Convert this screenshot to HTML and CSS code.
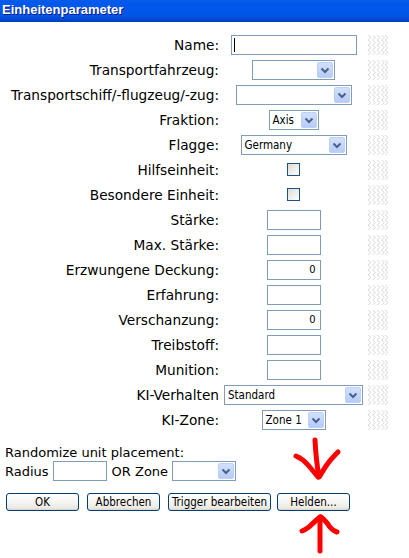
FILE: index.html
```html
<!DOCTYPE html>
<html lang="de">
<head>
<meta charset="utf-8">
<title>Einheitenparameter</title>
<link rel="stylesheet" href="styles.css">
</head>
<body>
<div class="titlebar">Einheitenparameter</div>

<div class="form">
  <div class="lbl">Name:</div>
  <div class="fld"><div class="inp w126"><span class="caret"></span></div></div>
  <div class="grip"></div>

  <div class="lbl">Transportfahrzeug:</div>
  <div class="fld"><div class="sel w83"><span class="txt"></span><span class="dd"></span></div></div>
  <div class="grip"></div>

  <div class="lbl">Transportschiff/-flugzeug/-zug:</div>
  <div class="fld"><div class="sel w116"><span class="txt"></span><span class="dd"></span></div></div>
  <div class="grip"></div>

  <div class="lbl">Fraktion:</div>
  <div class="fld"><div class="sel w50"><span class="txt">Axis</span><span class="dd"></span></div></div>
  <div class="grip"></div>

  <div class="lbl">Flagge:</div>
  <div class="fld"><div class="sel w106"><span class="txt">Germany</span><span class="dd"></span></div></div>
  <div class="grip"></div>

  <div class="lbl">Hilfseinheit:</div>
  <div class="fld"><div class="chk"></div></div>
  <div class="grip"></div>

  <div class="lbl">Besondere Einheit:</div>
  <div class="fld"><div class="chk"></div></div>
  <div class="grip"></div>

  <div class="lbl">Stärke:</div>
  <div class="fld"><div class="inp w54"></div></div>
  <div class="grip"></div>

  <div class="lbl">Max. Stärke:</div>
  <div class="fld"><div class="inp w54"></div></div>
  <div class="grip"></div>

  <div class="lbl">Erzwungene Deckung:</div>
  <div class="fld"><div class="inp w54 num">0</div></div>
  <div class="grip"></div>

  <div class="lbl">Erfahrung:</div>
  <div class="fld"><div class="inp w54"></div></div>
  <div class="grip"></div>

  <div class="lbl">Verschanzung:</div>
  <div class="fld"><div class="inp w54 num">0</div></div>
  <div class="grip"></div>

  <div class="lbl">Treibstoff:</div>
  <div class="fld"><div class="inp w54"></div></div>
  <div class="grip"></div>

  <div class="lbl">Munition:</div>
  <div class="fld"><div class="inp w54"></div></div>
  <div class="grip"></div>

  <div class="lbl">KI-Verhalten</div>
  <div class="fld"><div class="sel w139"><span class="txt">Standard</span><span class="dd"></span></div></div>
  <div class="grip"></div>

  <div class="lbl">KI-Zone:</div>
  <div class="fld"><div class="sel w64"><span class="txt">Zone 1</span><span class="dd"></span></div></div>
  <div class="grip"></div>
</div>

<div class="random">
  <div class="rtitle">Randomize unit placement:</div>
  <div class="rrow">
    <span>Radius</span>
    <div class="inp w54"></div>
    <span>OR Zone</span>
    <div class="sel w64"><span class="txt"></span><span class="dd"></span></div>
  </div>
</div>

<div class="buttons">
  <div class="btn w73">OK</div>
  <div class="btn w73">Abbrechen</div>
  <div class="btn w103">Trigger bearbeiten</div>
  <div class="btn w73">Helden...</div>
</div>

<svg class="arrows" width="409" height="558" viewBox="0 0 409 558">
  <g fill="none" stroke="#ff0000" stroke-width="5" stroke-linecap="round" stroke-linejoin="round">
    <path d="M315 440 Q316 460 319 477"/>
    <path d="M296 456 Q303 459 308 465 Q314 472 318 477"/>
    <path d="M338 452 Q330 460 326 466 Q322 472 320 476"/>
    <path d="M320 518 Q320 535 320 551"/>
    <path d="M320 517 Q313 523 309 527 Q305 530 302 531"/>
    <path d="M321 517 Q327 522 329 526 Q333 531 337 532"/>
  </g>
</svg>
</body>
</html>
```
FILE: styles.css
```css
html, body {
  margin: 0;
  padding: 0;
  background: #ffffff;
}
body {
  width: 409px;
  height: 558px;
  position: relative;
  overflow: hidden;
  font-family: "DejaVu Sans", Verdana, sans-serif;
  color: #000;
}
.titlebar {
  height: 22px;
  box-sizing: border-box;
  padding: 2px 0 0 2px;
  background: linear-gradient(to bottom, #0a5ce6 0%, #0058ee 15%, #0055e6 70%, #0049d4 88%, #003fb8 100%);
  color: #fff;
  font: bold 13px/16px "Liberation Sans", Arial, sans-serif;
  text-shadow: 1px 1px 0 #0b1a8c;
}
.form {
  display: grid;
  grid-template-columns: 220px 147px 22px;
  grid-auto-rows: 25px;
  padding-top: 10px;
  align-items: center;
}
.lbl {
  text-align: right;
  padding-right: 1px;
  font-size: 13.7px;
  white-space: nowrap;
}
.fld {
  display: flex;
  justify-content: center;
  align-items: center;
}
.grip {
  width: 22px;
  height: 20px;
  background-image: url("data:image/svg+xml;utf8,<svg xmlns='http://www.w3.org/2000/svg' width='22' height='20'><g fill='none' stroke='%23dadada' stroke-width='1'><polyline points='1,0 4,2.5 1,5 4,7.5 1,10 4,12.5 1,15 4,17.5 1,20'/><polyline points='5.5,0 8.5,2.5 5.5,5 8.5,7.5 5.5,10 8.5,12.5 5.5,15 8.5,17.5 5.5,20'/><polyline points='10,0 13,2.5 10,5 13,7.5 10,10 13,12.5 10,15 13,17.5 10,20'/><polyline points='14.5,0 17.5,2.5 14.5,5 17.5,7.5 14.5,10 17.5,12.5 14.5,15 17.5,17.5 14.5,20'/><polyline points='18,0 21,2.5 18,5 21,7.5 18,10 21,12.5 18,15 21,17.5 18,20'/></g></svg>");
}
.inp {
  position: relative;
  height: 20px;
  box-sizing: border-box;
  border: 1px solid #7f9db9;
  background: #fff;
  font: 11px/18px "DejaVu Sans Condensed", "DejaVu Sans", sans-serif;
  padding: 0 4px;
}
.inp.num {
  text-align: right;
}
.caret {
  position: absolute;
  left: 2px;
  top: 2px;
  width: 1px;
  height: 14px;
  background: #000;
}
.sel {
  display: flex;
  align-items: center;
  height: 20px;
  box-sizing: border-box;
  border: 1px solid #7f9db9;
  background: #fff;
  padding: 1px;
}
.sel .txt {
  flex: 1;
  font: 11.5px/16px "DejaVu Sans Condensed", "DejaVu Sans", sans-serif;
  padding-left: 2px;
  white-space: nowrap;
  overflow: hidden;
}
.sel .dd {
  width: 16px;
  height: 16px;
  box-sizing: border-box;
  border: 1px solid #bdd0f8;
  border-radius: 2px;
  background-color: #c3d5fd;
  background-image: url("data:image/svg+xml;utf8,<svg xmlns='http://www.w3.org/2000/svg' width='14' height='14'><path d='M3.5 5.5 L7 9 L10.5 5.5' fill='none' stroke='%234d6185' stroke-width='2'/></svg>"), linear-gradient(to bottom, #d2e0fd, #b6cbf9);
  background-repeat: no-repeat;
}
.chk {
  width: 13px;
  height: 13px;
  box-sizing: border-box;
  border: 1px solid #1c5180;
  background: linear-gradient(135deg, #dcdcd6, #ffffff);
}
.w126 { width: 126px; }
.w83 { width: 83px; }
.w116 { width: 116px; }
.w50 { width: 50px; }
.w106 { width: 106px; }
.w54 { width: 54px; }
.w139 { width: 139px; }
.w64 { width: 64px; }
.w73 { width: 73px; }
.w103 { width: 103px; }

.random {
  padding: 13px 0 0 5px;
  font-size: 13px;
}
.rtitle {
  line-height: 16px;
}
.rrow {
  display: flex;
  align-items: center;
  height: 20px;
}
.rrow .inp {
  margin: 0 5px 0 4px;
}
.rrow .sel {
  margin-left: 4px;
}
.buttons {
  display: flex;
  gap: 8px;
  padding: 12px 0 0 6px;
}
.btn {
  height: 18px;
  box-sizing: border-box;
  border: 1px solid #003c74;
  border-radius: 3px;
  background: linear-gradient(to bottom, #ffffff 0%, #f7f7f4 40%, #ecebe6 85%, #d8d4ca 100%);
  font: 11.5px/16px "DejaVu Sans Condensed", "DejaVu Sans", sans-serif;
  text-align: center;
  color: #000;
}
.btn:last-child {
  margin-left: -2px;
}
.arrows {
  position: absolute;
  left: 0;
  top: 0;
  pointer-events: none;
}
```
